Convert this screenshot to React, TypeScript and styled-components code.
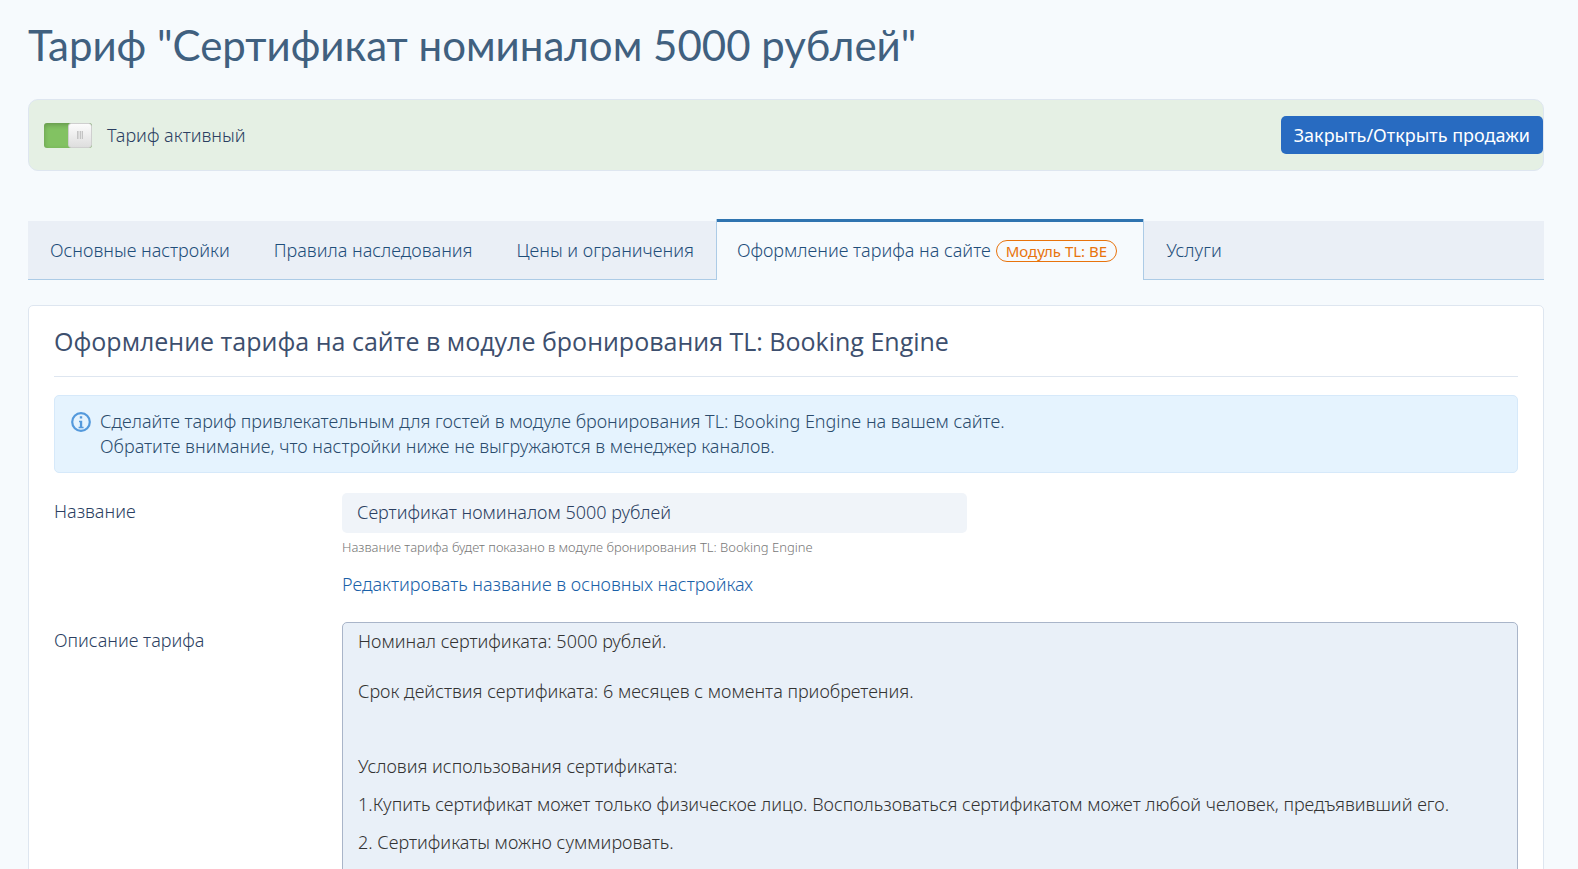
import React, { useState } from 'react';
import styled, { createGlobalStyle } from 'styled-components';

const GlobalStyle = createGlobalStyle`
  *, *::before, *::after { box-sizing: border-box; }
  body {
    margin: 0;
    background: #f6fafd;
    color: #2c3f62;
    font: 300 18px/25px "Noto Sans", "Open Sans", sans-serif;
  }
  a { text-decoration: none; }
`;

const Page = styled.main`
  display: flex;
  flex-direction: column;
  height: 100vh;
  overflow: hidden;
  padding: 16px 34px 0 28px;
`;

const Title = styled.h1`
  flex: none;
  margin: 0 0 24px;
  font: 400 42px/59px Lato, "Liberation Sans", sans-serif;
  color: #40607f;
`;

const StatusBar = styled.section`
  flex: none;
  display: flex;
  align-items: center;
  justify-content: space-between;
  height: 72px;
  padding-left: 15px;
  border: 1px solid #dee6f0;
  border-radius: 10px;
  background: #e5f0e4;
`;

const SwitchLabel = styled.label`
  display: flex;
  align-items: center;
  gap: 15px;
  cursor: pointer;
`;

const Switch = styled.input`
  appearance: none;
  display: flex;
  justify-content: flex-start;
  width: 48px;
  height: 25px;
  margin: 0;
  border-radius: 3px;
  background: #c9ccd0;
  box-shadow: inset 0 2px 5px rgba(0, 0, 0, 0.22);
  cursor: pointer;

  &::before {
    content: '';
    width: 24px;
    height: 25px;
    border: 1px solid #cfcfcf;
    border-radius: 3px;
    background:
      linear-gradient(90deg, #c4c4c4 1px, #d6d6d6 1px 2px, #e2e2e2 2px 3px, #c4c4c4 3px 4px, #e2e2e2 4px 5px, #c4c4c4 5px 6px) center / 6px 8px no-repeat,
      linear-gradient(#fcfcfc, #dedede);
  }

  &:checked {
    justify-content: flex-end;
    background: #82c262;
  }
`;

const PrimaryButton = styled.button`
  height: 38px;
  padding: 0 13px;
  border: 0;
  border-radius: 5px;
  background: #286bc1;
  color: #fff;
  font: inherit;
  font-weight: 400;
  cursor: pointer;
`;

const Tabs = styled.nav`
  flex: none;
  display: flex;
  height: 59px;
  margin: 50px 0 25px;
  border-bottom: 1px solid #accbe6;
  background: #eaeff6;
`;

const Tab = styled.a<{ $active?: boolean }>`
  display: flex;
  align-items: center;
  gap: 5px;
  padding: ${p => (p.$active ? '2px 26px 1px 20px' : '0 22px')};
  margin: ${p => (p.$active ? '-2px 0 -1px' : '0')};
  border: solid #accbe6;
  border-width: ${p => (p.$active ? '0 1px' : '0')};
  background: ${p => (p.$active ? '#f6fafd' : 'none')};
  box-shadow: ${p => (p.$active ? 'inset 0 3px #2f74b0' : 'none')};
  color: #1f4e7a;
  white-space: nowrap;
`;

const Badge = styled.span`
  height: 22px;
  padding: 0 9px;
  margin-top: 2px;
  border: 1px solid #e8730c;
  border-radius: 11px;
  color: #e8730c;
  font-size: 15px;
  font-weight: 400;
  line-height: 20px;
`;

const Panel = styled.section`
  flex: none;
  padding: 0 25px 24px;
  border: 1px solid #dee6f0;
  border-radius: 5px;
  background: #fff;
`;

const PanelTitle = styled.h2`
  margin: 0 0 18px;
  padding: 18px 0 17px;
  border-bottom: 1px solid #dee6f0;
  color: #3d4f6e;
  font: 400 25px/35px "Open Sans", "Noto Sans", sans-serif;
`;

const Notice = styled.div`
  display: flex;
  gap: 9px;
  margin-bottom: 20px;
  padding: 13px 16px;
  border: 1px solid #d6e9fa;
  border-radius: 5px;
  background: #e5f3fe;
  color: #2b4c6d;

  svg { flex: none; margin-top: 3px; }
  p { margin: 0; }
`;

const Field = styled.div`
  display: grid;
  grid-template-columns: 288px minmax(0, 1fr);
  margin-bottom: 25px;
`;

const FieldLabel = styled.label`
  padding-top: 6px;
`;

const TextInput = styled.input`
  display: block;
  width: 625px;
  max-width: 100%;
  height: 40px;
  padding: 0 15px 2px;
  border: 0;
  border-radius: 5px;
  background: #f0f4f9;
  color: inherit;
  font: inherit;
`;

const Hint = styled.p`
  margin: 4px 0 15px;
  color: #777;
  font-size: 13px;
  line-height: 20px;
`;

const Link = styled.a`
  display: block;
  color: #1a61a8;
`;

const Editor = styled.div`
  min-height: 420px;
  padding: 6px 15px;
  border: 1px solid #a9b5c9;
  border-radius: 5px;
  background: #e9f0f8;
  color: #333;
  outline: 0;

  p { min-height: 24px; margin: 0 0 13px; }
`;

const InfoIcon = () => (
  <svg width="20" height="20" viewBox="0 0 20 20" fill="none" aria-hidden="true">
    <circle cx="10" cy="10" r="8.8" stroke="#5499dc" strokeWidth="2.2" />
    <path d="M8.8 4.2h2.4v2.2H8.8zM8 8.8h3.2v6H12.6v1.4H7.6v-1.4H8.9v-4.6H8z" fill="#5499dc" />
  </svg>
);

const tabs = ['Основные настройки', 'Правила наследования', 'Цены и ограничения', 'Оформление тарифа на сайте', 'Услуги'];
const activeTab = 3;

export default function App() {
  const [enabled, setEnabled] = useState(true);

  return (
    <>
      <GlobalStyle />
      <Page>
        <Title>Тариф "Сертификат номиналом 5000 рублей"</Title>
        <StatusBar>
          <SwitchLabel>
            <Switch type="checkbox" role="switch" checked={enabled} onChange={e => setEnabled(e.target.checked)} />
            Тариф активный
          </SwitchLabel>
          <PrimaryButton type="button">Закрыть/Открыть продажи</PrimaryButton>
        </StatusBar>
        <Tabs>
          {tabs.map((name, i) => (
            <Tab key={name} href="#" $active={i === activeTab} aria-current={i === activeTab ? 'page' : undefined}>
              {name}
              {i === activeTab && <Badge>Модуль TL: BE</Badge>}
            </Tab>
          ))}
        </Tabs>
        <Panel>
          <PanelTitle>Оформление тарифа на сайте в модуле бронирования TL: Booking Engine</PanelTitle>
          <Notice>
            <InfoIcon />
            <p>
              Сделайте тариф привлекательным для гостей в модуле бронирования TL: Booking Engine на вашем сайте.
              <br />
              Обратите внимание, что настройки ниже не выгружаются в менеджер каналов.
            </p>
          </Notice>
          <Field>
            <FieldLabel htmlFor="rate-name">Название</FieldLabel>
            <div>
              <TextInput id="rate-name" readOnly value="Сертификат номиналом 5000 рублей" aria-describedby="rate-name-hint" />
              <Hint id="rate-name-hint">Название тарифа будет показано в модуле бронирования TL: Booking Engine</Hint>
              <Link href="#">Редактировать название в основных настройках</Link>
            </div>
          </Field>
          <Field>
            <FieldLabel as="span" id="description-label">Описание тарифа</FieldLabel>
            <Editor role="textbox" aria-multiline="true" aria-labelledby="description-label" contentEditable suppressContentEditableWarning spellCheck={false}>
              <p>
                Номинал сертификата: 5000 рублей.
                <br />
                <br />
                Срок действия сертификата: 6 месяцев с момента приобретения.
              </p>
              <p />
              <p>Условия использования сертификата:</p>
              <p>1.Купить сертификат может только физическое лицо. Воспользоваться сертификатом может любой человек, предъявивший его.</p>
              <p>2. Сертификаты можно суммировать.</p>
            </Editor>
          </Field>
        </Panel>
      </Page>
    </>
  );
}
